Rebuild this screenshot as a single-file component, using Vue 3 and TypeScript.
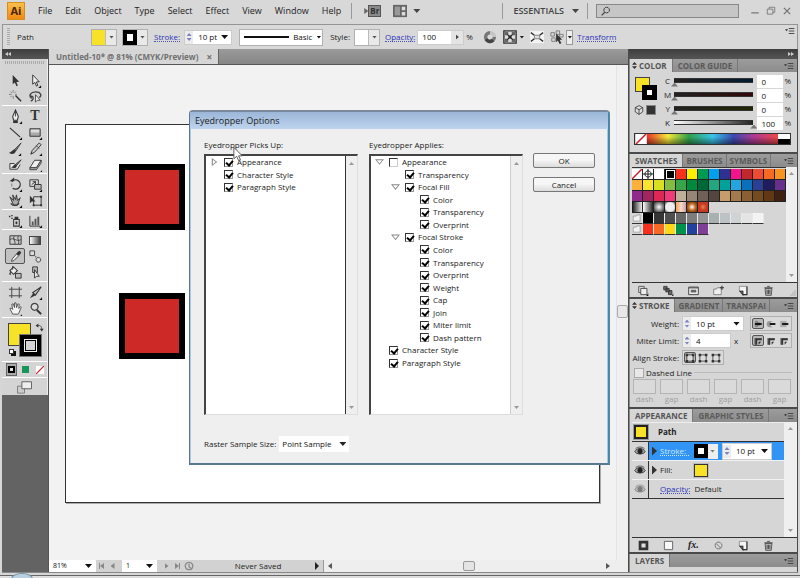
<script setup lang="ts">
import { h, ref } from 'vue'

type Shape = [d: string, fill: string, stroke?: string, width?: number]

const K = '#333'
const G = '#777'
const icons: Record<string, Shape[]> = {
  select: [['M5 2 L5 12 L7.300 10 L9 14 L10.500 13.300 L8.900 9.500 L12 9.300 Z', K]],
  direct: [['M5 2 L5 12 L7.300 10 L9 14 L10.500 13.300 L8.900 9.500 L12 9.300 Z', '#eee', K, 1], ['M14 13v3h-3z', '#111']],
  wand: [['M8 7 L14 13', 'none', K, 1.6], ['M5.500 1v3M5.500 7.500v3M1 5.700h3M7.500 5.700h2M2.500 2.700l1.500 1.500M8.500 2.700l-1.500 1.500M2.500 8.700l1.500-1.500', 'none', G, 0.9]],
  lasso: [['M4 10 C0 7 3 3 8 3 C14 3 15 7 12 9 M4 10 C2 9 3 7 5 8 C6 10 5 12 3 13', 'none', '#444', 1.4], ['M8 6v8l2-2 3 0z', '#eee', K, 0.8]],
  pen: [['M8 1 L5 8 L6 12 H10 L11 8 Z', '#eee', K, 1.1], ['M8 2v6', 'none', K, 0.9], ['M5.500 12.500h5v2.500h-5z', K], ['M15 13v3h-3z', '#111']],
  line: [['M2 3 L13 13', 'none', K, 1.2], ['M15 13v3h-3z', '#111']],
  rect: [['M2 4h11v8h-11z', '#aaa', K, 1], ['M3 5h9v3h-9z', '#ddd'], ['M15 13v3h-3z', '#111']],
  brush: [['M14 2 L7 9 L8.500 10.500 Z', G, K, 0.8], ['M7.500 9 C5 8.500 4 12 1 12.500 C4 15 8 14 8.500 10.500 Z', K], ['M14 13v3h-3z', '#111']],
  pencil: [['M12 2 L14 4 L7 12 L3 14 L4.500 10 Z', '#ccc', K, 1], ['M3 14 L3.700 12 L5 13.200Z', K], ['M9 5l3 3', 'none', K, 0.8], ['M15 13v3h-3z', '#111']],
  blob: [['M2 7h5M2 7v6h8l3-5', '#eee', K, 1], ['M14 3 L8 8 L9 9.500 Z', G, K, 0.9], ['M8.500 8 C6 7 6 11 3 11 C6 12.500 9 12 9.500 9.500Z', K]],
  eraser: [['M7 3.500 L14 3.500 L9 11.500 L2 11.500 Z', '#eee', K, 1], ['M2 11.500v2h7l5-7v-3l-5 8z', '#bbb', K, 0.9], ['M15 14v2h-2z', '#111']],
  rotate: [['M4 5 A5 5 0 1 1 5 12', 'none', K, 1.4], ['M1.500 4.500 h5 v-4z', K], ['M4 7v3', 'none', G, 1], ['M15 13v3h-3z', '#111']],
  scale: [['M2 3h9v7h-9z', '#ddd', K, 1], ['M7 8h7v5h-7z', '#bbb', K, 1], ['M4 8l4-3M5 5h3v3', 'none', K, 1], ['M15 13v3h-3z', '#111']],
  warp: [['M2 4 L6 8 L5 2 L8 7 L9 2 L10 8 L13 5 L10 13 H6 Z', '#aaa', K, 1], ['M3 11 C5 14 9 14 12 11', 'none', K, 1.3], ['M15 13v3h-3z', '#111']],
  free: [['M6 4h8v9h-8z', 'none', K, 1], ['M2 3v8l2-2 4 0z', K], ['M13 3h2v2h-2zM13 12h2v2h-2zM5 12h2v2h-2z', K]],
  spray: [['M6 7h6v7h-6z', '#ddd', K, 1.1], ['M7 4h4v3h-4z', K], ['M8 9h2v3h-2z', K], ['M1 3h1.500v1.500h-1.500zM3.500 2h1.500v1.500h-1.500zM3.500 5h1.500v1.500h-1.500z', K], ['M15 13v3h-3z', '#111']],
  graph: [['M2 3v11h11', 'none', K, 1], ['M4 9h2v4h-2zM7 6h2v7h-2zM10 4h2v9h-2z', '#555'], ['M15 13v3h-3z', '#111']],
  mesh: [['M2 3h12v9h-12z', '#ccc', K, 1], ['M2 7 C6 4 9 10 14 7 M7 3 C4 6 9 9 7 12 M11 3 C9 6 13 9 11 12', 'none', '#444', 1]],
  eyedropper: [['M10 4 L12.500 6.500 L6 13 L3 14 L4 11 Z', '#eee', K, 1], ['M9 5l2-3 2-1 2 2 -1 2 -3 2z', K]],
  blend: [['M2 2h5v5h-5z', '#ddd', K, 0.9], ['M11 9a2.500 2.500 0 1 0 .1 0z', '#ddd', K, 0.9], ['M7.500 7.500h1.500v1.500h-1.500z', G]],
  live: [['M2 6 L6 2 L10 6 L6 10 Z', '#eee', K, 1.1], ['M8 9h6v5h-6z', '#bbb', K, 1], ['M3 7 C0 9 2 12 3 10z', K], ['M5 1v4', 'none', K, 1]],
  livesel: [['M5 2h5v6h-5z', '#bbb', K, 1], ['M7 5v9l2-2 3 0z', '#eee', K, 1]],
  artboard: [['M4 2v12M12 2v12M1 4.500h14M1 11.500h14', 'none', '#444', 1]],
  slice: [['M14 2 L5 8 L8 11 Z', '#bbb', K, 1.1], ['M6 8 L2 14 L8 11Z', K], ['M15 13v3h-3z', '#111']],
  hand: [['M5 14 L2 8 L3.500 7.500 L5 9 L4 3.500 L5.500 3 L7 7 L7 2 L8.500 2 L9.200 7 L10.500 3 L12 3.500 L11.500 8 L13.500 6 L14 7 L11.500 13 L11 14 Z', '#f4f4f4', '#444', 0.9], ['M15 14v2h-2z', '#111']],
  zoom: [['M7 2.500a3.700 3.700 0 1 0 .1 0z', '#ddd', '#444', 1.3], ['M9.500 9.500 L14 14', 'none', K, 2.2]],
  swap: [['M4 5 C9 3 12 6 12 11', 'none', K, 1.4], ['M1 5l5-4v7zM8.500 10h7l-3.500 5z', K]],
  screen: [['M0 7h8v8h-8z', '#ccc', G, 1], ['M5 2h11v8h-11z', '#eee', '#555', 1]],
  search: [['M9 2a4.500 4.500 0 1 0 .1 0z', 'none', '#444', 1.6], ['M6 10 L1 15', 'none', '#444', 2]],
  arrange: [['M0 1h16v14h-16z', '#666'], ['M2 3h6v10h-6z', '#999'], ['M10 3h4v4h-4zM10 9h4v4h-4z', '#ddd']],
  globe: [['M8 3a5 5 0 1 0 5 5', 'none', G, 4], ['M8 3a5 5 0 0 1 5 5', 'none', '#c4c4c4', 4], ['M3.500 10.500a5 5 0 0 0 8 1', 'none', '#444', 4]],
  doc: [['M1 1h14v14h-14z', '#ddd', K, 1.6], ['M2 2h4v4h-4zM10 2h4v4h-4zM2 10h4v4h-4zM10 10h4v4h-4zM6 6h4v4h-4z', '#666'], ['M5 5l6 6M11 5l-6 6', 'none', '#222', 1.2]],
  isolate: [['M0 1h16v14h-16z', '#f4f4f4'], ['M1 3l4 3M15 3l-4 3M1 13l4-3M15 13l-4-3', 'none', K, 1.6], ['M5 6h6v4h-6z', '#ddd', G, 1]],
  similar: [['M1 3h4v4h-4zM7 1h4v4h-4zM2 9h4v4h-4zM11 5h4v3h-4z', 'none', G, 1], ['M7 4v10l2-2 2 4 2-1-2-4h3z', K]],
  cube: [['M8 1 L14 4 V11 L8 15 L2 11 V4 Z M2 4 L8 7.500 L14 4 M8 7.500 V15', '#ddd', K, 1.3]],
  none: [['M0 0h16v16h-16z', '#fff'], ['M0 16L16 0', 'none', '#c8202c', 2.4]],
  target: [['M0 0h16v16h-16z', '#fff'], ['M8 3a5 5 0 1 0 .1 0zM8 0v16M0 8h16', 'none', '#111', 1.5]],
  folder: [['M2 5h5l1-2h5v10h-11z', '#f2f2f2', '#888', 1]],
  lib: [['M1 2h8v9h-8z', '#ddd', '#555', 1.3], ['M4 5h9v9h-9z', '#eee', '#444', 1.3], ['M15 12v4h-3z', '#111']],
  kinds: [['M1 2h5v5h-5zM4 5h5v5h-5zM8 8h5v6h-5z', '#666', K, 1.2], ['M15 12v4h-2z', '#111']],
  opts: [['M1 3h14v11h-14z', '#eee', '#444', 1.4], ['M1 3h14v2h-14zM4 7h8v4h-8z', '#666']],
  newgroup: [['M1 6h4l1-2h6v10h-11z', '#eee', G, 1.2], ['M13 1v6M10 4h6', 'none', K, 1.6]],
  page: [['M2 2h11v12h-6v-5h-5z', '#f4f4f4', G, 1], ['M13 2v12h-7M3 9h4v5z', 'none', K, 1.6]],
  trash: [['M3 5h10l-1 10h-8z', '#bbb', '#444', 1.2], ['M2 4h12M6 2h4M6 7v6M8 7v6M10 7v6', 'none', '#444', 1.3]],
  eye: [['M1 9 C4 3 12 3 15 9 C12 13 4 13 1 9 Z', '#aaa', K, 1.2], ['M8 5a3.500 3.500 0 1 0 .1 0z', '#222'], ['M2 5 C5 2 11 2 14 5', 'none', K, 1]],
  cap1: [['M3 3h5v10h-5z', '#888'], ['M3 8h11', 'none', '#111', 3], ['M7 6h4v4h-4z', '#111']],
  cap2: [['M6 3h6a5 5 0 0 0 0 10h-6a5 5 0 0 1 0-10z', '#999'], ['M6 8h9', 'none', '#111', 3]],
  cap3: [['M2 3h10v10h-10z', '#aaa'], ['M5 8h10', 'none', '#111', 3]],
  join: [['M2 3h12v4h-7v7h-5z', '#777'], ['M4 5h10M5 5v9', 'none', '#222', 2], ['M9 9h4l-4 5z', K]],
  align: [['M3 3h10v10h-10z', '#ddd', '#444', 1.4], ['M1 1h4v4h-4zM11 1h4v4h-4zM1 11h4v4h-4zM11 11h4v4h-4z', K]],
  sqfill: [['M3 3h10v10h-10z', '#ddd', '#333', 4]],
  sq: [['M2 2h12v12h-12z', '#f8f8f8', '#666', 1.4]],
  ban: [['M8 3a5 5 0 1 0 .1 0zM4.500 5l7 7', 'none', '#777', 1.4]],
  clock: [['M8 2a6 6 0 1 0 .1 0z', 'none', '#888', 2], ['M8 4v5l5 4', 'none', '#888', 2]],
  min: [['M2 11h12', 'none', '#777', 2]],
  restore: [['M5 5V2h9v8h-3M2 5h9v8h-9z', 'none', '#777', 1.4]],
  close: [['M3 3l10 10M13 3l-10 10', 'none', '#777', 2.2]],
  menu: [['M0 5h5l-2.500 3.500z', K], ['M6 4h9M6 8h9M6 12h9', 'none', '#444', 1.5]],
  resize: [['M14 3v2M10 7v2M14 7v2M6 11v2M10 11v2M14 11v2', 'none', '#888', 2]],
  cursor: [['M2 1 L2 13 L5 10.500 L7 15 L9 14 L7 10 L11 10 Z', '#fff', '#555', 1]],
}

const Icon = (props: { n: string }) =>
  h('svg', { viewBox: '0 0 16 16', class: 'icon', 'aria-hidden': 'true' },
    icons[props.n].map(([d, fill, stroke, width]) =>
      h('path', { d, fill, stroke: stroke ?? 'none', 'stroke-width': width ?? 0 })))
Icon.props = ['n']

const menus = ['File', 'Edit', 'Object', 'Type', 'Select', 'Effect', 'View', 'Window', 'Help']
const tools = [
  ['select', 'direct', 'wand', 'lasso'],
  ['pen', 'type', 'line', 'rect', 'brush', 'pencil', 'blob', 'eraser'],
  ['rotate', 'scale', 'warp', 'free'],
  ['spray', 'graph'],
  ['mesh', 'gradient', 'eyedropper', 'blend', 'live', 'livesel'],
  ['artboard', 'slice', 'hand', 'zoom'],
]
const channels = ref([
  { name: 'C', value: 0, key: 'c' },
  { name: 'M', value: 0, key: 'm' },
  { name: 'Y', value: 0, key: 'y' },
  { name: 'K', value: 100, key: 'k' },
])
const swatchRows = [
  ['none', 'target', '#ffffff', '#000000', '#f5301f', '#fdee00', '#009a4e', '#00a0ef', '#2e3192', '#f3148c', '#c1272d', '#ef4a33', '#f66a24', '#f7931e'],
  ['#fbb03b', '#fbe42f', '#d9e021', '#84bc41', '#39a548', '#008a3c', '#006837', '#22a77e', '#00a19b', '#25a5de', '#0c6fbb', '#2b3f94', '#211d5c', '#67308f'],
  ['#8f2a8c', '#a3255f', '#de2757', '#f13a7c', '#bfb199', '#978676', '#706057', '#52463f', '#c69c6d', '#a4794b', '#8a5f34', '#744a20', '#603813', '#402010'],
  ['g1', 'g2', 'g3', 'g4', 'g5', 'g6', 'g7'],
  ['folder', '#000000', '#353535', '#4e4e4e', '#666666', '#7d7d7d', '#949494', '#a9b0b0', '#bdc2c4', '#d0d3d4', '#e4e4e4', '#f3f3f3'],
  ['folder', '#f5301f', '#f66a24', '#fdd816', '#00904a', '#2142a0', '#7e4097'],
]
const isHex = (s: string) => s.startsWith('#')
const isIcon = (s: string) => s in icons

const picks = ref([
  { label: 'Appearance', on: true, arrow: 'closed' },
  { label: 'Character Style', on: true, arrow: '' },
  { label: 'Paragraph Style', on: true, arrow: '' },
])
const applies = ref([
  { label: 'Appearance', on: false, level: 0, arrow: 'open' },
  { label: 'Transparency', on: true, level: 1, arrow: '' },
  { label: 'Focal Fill', on: true, level: 1, arrow: 'open' },
  { label: 'Color', on: true, level: 2, arrow: '' },
  { label: 'Transparency', on: true, level: 2, arrow: '' },
  { label: 'Overprint', on: true, level: 2, arrow: '' },
  { label: 'Focal Stroke', on: true, level: 1, arrow: 'open' },
  { label: 'Color', on: true, level: 2, arrow: '' },
  { label: 'Transparency', on: true, level: 2, arrow: '' },
  { label: 'Overprint', on: true, level: 2, arrow: '' },
  { label: 'Weight', on: true, level: 2, arrow: '' },
  { label: 'Cap', on: true, level: 2, arrow: '' },
  { label: 'Join', on: true, level: 2, arrow: '' },
  { label: 'Miter limit', on: true, level: 2, arrow: '' },
  { label: 'Dash pattern', on: true, level: 2, arrow: '' },
  { label: 'Character Style', on: true, level: 0, arrow: '' },
  { label: 'Paragraph Style', on: true, level: 0, arrow: '' },
])
const dashes = ['dash', 'gap', 'dash', 'gap', 'dash', 'gap']
</script>

<template>
  <div class="app">
    <header class="menubar">
      <span class="logo">Ai</span>
      <nav class="menus">
        <button v-for="m in menus" :key="m">{{ m }}</button>
      </nav>
      <i class="vsep"></i>
      <button class="bridge" aria-label="Bridge"><i class="tri right"></i><b>Br</b></button>
      <button class="arrange" aria-label="Arrange documents"><Icon n="arrange" class="big" /><i class="tri"></i></button>
      <i class="vsep push"></i>
      <button class="workspace">ESSENTIALS <i class="tri"></i></button>
      <i class="vsep"></i>
      <label class="search"><Icon n="search" /><input type="text" aria-label="Search" /></label>
      <div class="winbtns">
        <button aria-label="Minimize"><Icon n="min" /></button>
        <button aria-label="Restore"><Icon n="restore" /></button>
        <button aria-label="Close"><Icon n="close" /></button>
      </div>
    </header>

    <section class="control">
      <i class="grip-v"></i>
      <span class="kind">Path</span>
      <button class="combo" aria-label="Fill"><i class="chip fill"></i><i class="tri small"></i></button>
      <button class="combo" aria-label="Stroke color"><i class="chip stroke"></i><i class="tri small"></i></button>
      <a href="#" class="link strokelink">Stroke:</a>
      <div class="field weight"><i class="spin"></i><input type="text" value="10 pt" aria-label="Stroke weight" /><i class="tri"></i></div>
      <button class="combo profile"><i class="rule"></i>Basic<i class="tri small boxed"></i></button>
      <span class="stylelabel">Style:</span>
      <button class="combo" aria-label="Style"><i class="chip blank"></i><i class="tri small"></i></button>
      <a href="#" class="link">Opacity:</a>
      <div class="field opacity"><input type="text" value="100" aria-label="Opacity" /><i class="stepbtn"><i class="tri right"></i></i></div>
      <span class="pct">%</span>
      <div class="ctlicons">
        <button aria-label="Recolor"><Icon n="globe" class="big" /></button>
        <button aria-label="Align"><Icon n="doc" class="big" /><i class="tri small"></i></button>
        <button aria-label="Isolate"><Icon n="isolate" class="big" /></button>
        <button aria-label="Select similar"><Icon n="similar" class="big" /><i class="drop"><i class="tri small"></i></i></button>
      </div>
      <a href="#" class="link">Transform</a>
      <button class="flyout" aria-label="Control menu"><Icon n="menu" /></button>
    </section>

    <main class="work">
      <aside class="toolcol">
        <div class="darkbar"><i class="tri left"></i><i class="tri left"></i></div>
        <div class="toolbox">
          <i class="grip-h"></i>
          <div v-for="(g, gi) in tools" :key="gi" class="group">
            <button v-for="t in g" :key="t" :class="{ active: t === 'eyedropper' }" :aria-label="t">
              <span v-if="t === 'type'" class="letter">T</span>
              <i v-else-if="t === 'gradient'" class="gradtool"></i>
              <Icon v-else :n="t" class="tool" />
            </button>
          </div>
          <div class="fillstroke">
            <i class="bigfill"></i>
            <i class="bigstroke"><i></i></i>
            <Icon n="swap" class="swap" />
            <i class="mini"></i>
          </div>
          <div class="modes">
            <button class="active" aria-label="Color"><i class="mode black"></i></button>
            <button aria-label="Gradient"><i class="mode green"></i></button>
            <button aria-label="None"><Icon n="none" class="nomode" /></button>
          </div>
          <button class="screenmode" aria-label="Screen mode"><Icon n="screen" class="big" /></button>
        </div>
      </aside>

      <section class="document">
        <div class="tabs"><div class="doctab">Untitled-10* @ 81% (CMYK/Preview)<button aria-label="Close tab">×</button></div></div>
        <div class="view">
          <div class="canvas">
            <div class="artboard">
              <i class="square first"></i>
              <i class="square second"></i>
            </div>
          </div>
          <div class="vscroll"><i></i></div>
        </div>
        <footer class="status">
          <button class="white zoomlevel">81%<i class="tri"></i></button>
          <button class="nav" aria-label="First"><i class="bar"></i><i class="tri left"></i></button>
          <button class="nav" aria-label="Previous"><i class="tri left"></i></button>
          <button class="white pageno">1<i class="tri"></i></button>
          <button class="nav" aria-label="Next"><i class="tri right"></i></button>
          <button class="nav" aria-label="Last"><i class="tri right"></i><i class="bar"></i></button>
          <Icon n="clock" class="clock" />
          <button class="saved"><span>Never Saved</span><i class="tri right large"></i></button>
          <div class="hscroll"><i class="tri left"></i><i class="thumb"></i><i class="tri right"></i></div>
        </footer>
      </section>

      <aside class="dock">
        <div class="darkbar end"><i class="tri right"></i><i class="tri right"></i></div>

        <section class="panel">
          <div class="ptabs"><button class="on"><i class="updown"></i>COLOR</button><button>COLOR GUIDE</button><i class="pmenu"><Icon n="menu" /></i></div>
          <div class="color">
            <div class="proxy">
              <i class="pfill"></i><i class="pstroke"></i>
              <div class="minis"><Icon n="cube" /><i class="darkchip"></i></div>
            </div>
            <div class="channels">
              <label v-for="c in channels" :key="c.key">
                <span>{{ c.name }}</span>
                <span class="track" :class="c.key"><i class="bar"></i><i class="knob" :style="{ left: c.value + '%' }"></i></span>
                <input v-model="c.value" type="text" />
                <span class="unit">%</span>
              </label>
            </div>
            <div class="spectrum"><Icon n="none" class="nocolor" /><i class="rainbow"></i><i class="bw"></i></div>
          </div>
        </section>

        <section class="panel">
          <div class="ptabs snug"><button class="on">SWATCHES</button><button>BRUSHES</button><button>SYMBOLS</button><i class="pmenu"><Icon n="menu" /></i></div>
          <div class="scrollable">
            <div class="swatches">
              <div v-for="(row, ri) in swatchRows" :key="ri" class="srow" :class="'r' + ri">
                <template v-for="(s, si) in row" :key="si">
                  <i v-if="isHex(s)" class="sw" :class="{ sel: s === '#000000' && ri === 0 }" :style="{ background: s }"></i>
                  <i v-else-if="isIcon(s)" class="sw" :class="s"><Icon :n="s" class="fit" /></i>
                  <i v-else class="sw" :class="s"></i>
                </template>
              </div>
            </div>
            <div class="pscroll"><i class="tri up"></i><i class="tri"></i></div>
          </div>
          <div class="pbar">
            <button v-for="n in ['lib', 'kinds', 'opts', 'newgroup', 'page', 'trash']" :key="n" :aria-label="n"><Icon :n="n" class="bari" /></button>
            <Icon n="resize" class="corner" />
          </div>
        </section>

        <section class="panel">
          <div class="ptabs snug"><button class="on"><i class="updown"></i>STROKE</button><button>GRADIENT</button><button>TRANSPAI</button><i class="pmenu"><Icon n="menu" /></i></div>
          <div class="strokep">
            <div class="line">
              <label for="wt">Weight:</label>
              <div class="field w"><i class="spin"></i><input id="wt" type="text" value="10 pt" /><i class="tri"></i></div>
              <div class="seg"><button class="on" aria-label="Butt cap"><Icon n="cap1" /></button><button aria-label="Round cap"><Icon n="cap2" /></button><button aria-label="Projecting cap"><Icon n="cap3" /></button></div>
            </div>
            <div class="line">
              <label for="ml">Miter Limit:</label>
              <div class="field m"><i class="spin"></i><input id="ml" type="text" value="4" /></div><span class="x">x</span>
              <div class="seg"><button class="on" aria-label="Miter join"><Icon n="join" /></button><button aria-label="Round join"><Icon n="join" /></button><button aria-label="Bevel join"><Icon n="join" /></button></div>
            </div>
            <div class="line">
              <span class="lead">Align Stroke:</span>
              <div class="seg near"><button class="on" aria-label="Center"><Icon n="align" /></button><button aria-label="Inside"><Icon n="align" /></button><button aria-label="Outside"><Icon n="align" /></button></div>
            </div>
            <label class="dashed"><input type="checkbox" class="flat" />Dashed Line<i></i></label>
            <div class="dashes">
              <label v-for="(d, i) in dashes" :key="i"><input type="text" disabled />{{ d }}</label>
            </div>
          </div>
        </section>

        <section class="panel">
          <div class="ptabs"><button class="on">APPEARANCE</button><button>GRAPHIC STYLES</button><i class="pmenu"><Icon n="menu" /></i></div>
          <div class="scrollable">
            <div class="appear">
              <div class="arow head"><i class="cell"><i class="thumbp"></i></i><b>Path</b></div>
              <div class="arow selected">
                <i class="cell"><Icon n="eye" class="eyei" /></i><i class="disc"></i><a href="#" class="link">Stroke:</a>
                <i class="chip stroke"></i><i class="dropc"><i class="tri small"></i></i>
                <div class="field w2"><i class="spin"></i><input type="text" value="10 pt" aria-label="Weight" /><i class="tri"></i></div>
              </div>
              <div class="arow"><i class="cell"><Icon n="eye" class="eyei" /></i><i class="disc"></i><span class="name">Fill:</span><i class="chip yfill"></i></div>
              <div class="arow last"><i class="cell"><Icon n="eye" class="eyei faint" /></i><i class="disc hid"></i><a href="#" class="link">Opacity:</a><span>Default</span></div>
            </div>
            <div class="pscroll"><i class="tri up"></i><i class="tri"></i></div>
          </div>
          <div class="pbar">
            <button aria-label="New stroke"><Icon n="sqfill" class="bari" /></button>
            <button aria-label="New fill"><Icon n="sq" class="bari" /></button>
            <button aria-label="Effects" class="fx">fx.</button>
            <button aria-label="Clear"><Icon n="ban" class="bari" /></button>
            <button aria-label="Duplicate"><Icon n="page" class="bari" /></button>
            <button aria-label="Delete"><Icon n="trash" class="bari" /></button>
            <i class="corner"></i>
          </div>
        </section>

        <section class="panel layers">
          <div class="ptabs"><button class="on">LAYERS</button><i class="pmenu"><Icon n="menu" /></i></div>
        </section>
      </aside>
    </main>
    <div class="taskbar"><i class="orb"></i></div>

    <div class="dialog" role="dialog" aria-labelledby="dt">
      <h1 id="dt">Eyedropper Options</h1>
      <div class="dbody">
        <div class="dcol">
          <h2>Eyedropper Picks Up:</h2>
          <div class="list">
            <div class="tree short">
              <label v-for="p in picks" :key="p.label"><i class="node" :class="p.arrow"></i><input v-model="p.on" type="checkbox" class="tick" />{{ p.label }}</label>
            </div>
            <div class="pscroll"><i class="tri up"></i><i class="tri"></i></div>
          </div>
          <div class="raster">
            <label for="rs">Raster Sample Size:</label>
            <span class="selwrap"><select id="rs"><option>Point Sample</option></select><i class="tri"></i></span>
          </div>
        </div>
        <div class="dcol">
          <h2>Eyedropper Applies:</h2>
          <div class="list">
            <div class="tree long">
              <label v-for="(a, i) in applies" :key="i" :class="'lv' + a.level"><i class="node" :class="a.arrow"></i><input v-model="a.on" type="checkbox" class="tick" />{{ a.label }}</label>
            </div>
            <div class="pscroll"><i class="tri up"></i><i class="tri"></i></div>
          </div>
        </div>
        <div class="dbtns"><button>OK</button><button>Cancel</button></div>
      </div>
      <Icon n="cursor" class="pointer" />
    </div>
  </div>
</template>

<style>
body { margin: 0; overflow: hidden; }
</style>

<style scoped>
.app, .app * { box-sizing: border-box; }
.app { position: relative; display: grid; grid-template-rows: 24px 25px minmax(0, 1fr) 5px; height: 100vh; background: #d6d6d6; font: 8px/12px "Open Sans", "Noto Sans", sans-serif; color: #222; }
i { font-style: normal; display: block; flex: none; }
button { font: inherit; color: inherit; background: none; border: 0; padding: 0; display: flex; align-items: center; white-space: nowrap; }
input { font: inherit; color: #111; border: 0; padding: 0; margin: 0; background: none; min-width: 0; outline: 0; }
h1, h2 { margin: 0; font-weight: 400; }
.icon { width: 10px; height: 10px; display: block; flex: none; }
.icon.big { width: 14px; height: 14px; }
.tri { width: 7px; height: 4px; background: currentColor; clip-path: polygon(0 0, 100% 0, 50% 100%); }
.tri.small { width: 5px; height: 3px; }
.tri.up { clip-path: polygon(50% 0, 100% 100%, 0 100%); }
.tri.right { width: 4px; height: 6px; clip-path: polygon(0 0, 100% 50%, 0 100%); }
.tri.left { width: 4px; height: 6px; clip-path: polygon(100% 0, 100% 100%, 0 50%); }
.tri.large { height: 8px; }
.link { color: #2b35b8; text-decoration: none; line-height: 9px; border-bottom: 1px dotted #4a52c0; white-space: nowrap; }

.menubar { display: flex; align-items: center; padding: 0 8px 2px 7px; font-size: 9px; background: #d8d8d8; }
.logo { width: 18px; height: 18px; line-height: 16px; text-align: center; font-size: 11px; font-weight: 700; color: #4a2500; background: linear-gradient(#fbc04a, #f08a12); border: 1px solid #d98a20; margin-right: 13px; }
.menus { display: flex; gap: 13px; margin-right: 10px; }
.vsep { width: 1px; height: 16px; background: #999; }
.bridge { margin-left: 12px; color: #666; }
.bridge b { font-size: 8px; line-height: 10px; padding: 0 1px; background: #8a8a8a; color: #333; border: 1px solid #555; }
.arrange { margin-left: 12px; gap: 6px; color: #444; }
.push { margin-left: auto; }
.workspace { gap: 8px; margin: 0 8px 0 10px; font-weight: 600; color: #444; }
.search { display: flex; align-items: center; width: 143px; height: 14px; margin-left: 8px; padding-left: 4px; background: #c6c6c6; border: 1px solid #888; }
.search input { flex: 1; }
.winbtns { display: flex; gap: 6px; margin-left: 11px; }

.control { display: flex; align-items: center; margin: 0 2px; padding: 0 2px 0 4px; border: 1px solid #949494; border-bottom: 0; background: #d9d9d9; white-space: nowrap; }
.grip-v { width: 3px; height: 18px; background: repeating-linear-gradient(#aaa 0 1px, transparent 1px 2px); margin-right: 7px; }
.kind { width: 74px; }
.combo { height: 17px; background: #e9e9e9; border: 1px solid #b0b0b0; color: #555; gap: 3px; padding-right: 2px; margin-right: 5px; }
.chip { width: 14px; height: 15px; }
.chip.fill { background: #f7e227; border-right: 1px solid #bbb; }
.chip.stroke { background: #fff; border: 4px solid #000; }
.chip.blank { background: #fff; border-right: 1px solid #bbb; }
.strokelink { margin: 0 4px 0 1px; }
.field { display: flex; align-items: center; height: 15px; background: #fff; border: 1px solid #ccc; color: #111; }
.field input { flex: 1; width: 0; }
.spin { width: 8px; height: 13px; margin-right: 5px; background: #ececec; display: flex; flex-direction: column; align-items: center; justify-content: center; gap: 2px; }
.spin::before, .spin::after { content: ""; width: 5px; height: 3px; background: #7d84bf; clip-path: polygon(50% 0, 100% 100%, 0 100%); }
.spin::after { clip-path: polygon(0 0, 100% 0, 50% 100%); }
.field .tri { margin-right: 3px; }
.weight { width: 48px; margin-right: 7px; }
.profile { width: 84px; background: #fff; color: #111; gap: 4px; padding-left: 4px; margin-right: 7px; }
.rule { width: 45px; height: 2px; background: #111; }
.boxed { margin-left: auto; }
.stylelabel { margin-right: 4px; }
.opacity { width: 47px; margin: 0 2px; padding-left: 4px; }
.stepbtn { width: 12px; height: 13px; display: flex; align-items: center; justify-content: center; background: #e4e4e4; }
.stepbtn .tri.right { width: 3px; height: 5px; margin: 0; background: #444; }
.pct { width: 17px; }
.ctlicons { display: flex; gap: 6px; margin-right: 4px; }
.ctlicons button { gap: 2px; }
.drop { border: 1px solid #999; background: #eee; padding: 5px 0; }
.flyout { margin-left: auto; align-self: flex-start; padding-top: 1px; }

.work { display: grid; grid-template-columns: 47px minmax(0, 1fr) 170px; margin: 0 2px; border-bottom: 1px solid #888; min-height: 0; }
.darkbar { display: flex; align-items: center; height: 10px; padding: 0 3px; color: #ccc; background: linear-gradient(#3e3e3e, #555); }
.darkbar .tri { width: 3px; height: 4px; }
.darkbar.end { justify-content: flex-end; }
.toolcol { background: #636363; border-right: 1px solid #555; }
.toolbox { padding-top: 1px; background: #d4d4d4; border-right: 1px solid #eee; }
.grip-h { height: 3px; margin: 1px 3px 8px; background: repeating-linear-gradient(90deg, #aaa 0 1px, transparent 1px 2px); }
.group { display: grid; grid-template-columns: 20px 20px; padding: 2px 0 1px 3px; border-bottom: 1px solid #fff; }
.group:nth-child(2) { padding-top: 0; }
.group button { height: 16px; justify-content: center; }
.group button.active { border: 1px solid #555; background: #c2c2c2; border-radius: 2px; }
.icon.tool { width: 15px; height: 15px; }
.group .active .tool { width: 13px; height: 13px; }
.letter { font: 700 14px/14px "Liberation Serif", serif; color: #333; }
.gradtool { width: 12px; height: 9px; border: 1px solid #444; background: linear-gradient(90deg, #fff, #444); }
.fillstroke { position: relative; height: 44px; border-bottom: 1px solid #fff; }
.bigfill, .bigstroke, .swap, .mini { position: absolute; }
.bigfill { left: 6px; top: 5px; width: 23px; height: 23px; background: #f7e227; border: 1px solid #444; }
.bigstroke { left: 17px; top: 16px; width: 23px; height: 23px; background: #000; border: 1px solid #777; padding: 5px; }
.bigstroke i { width: 11px; height: 11px; background: #d4d4d4; border: 1px solid #000; outline: 1px solid #eee; }
.icon.swap { left: 33px; top: 5px; width: 9px; height: 9px; }
.mini { left: 7px; top: 31px; width: 5px; height: 5px; background: #fff; border: 1px solid #333; box-shadow: 2px 2px 0 #111; }
.modes { display: flex; gap: 3px; padding: 1px 0 1px 4px; border-bottom: 1px solid #fff; height: 16px; }
.modes button { width: 11px; justify-content: center; }
.modes button.active { border: 1px solid #666; background: #aaa; }
.icon.nomode { width: 8px; height: 8px; }
.mode { width: 7px; height: 7px; }
.black { border: 2px solid #000; background: #ddd; }
.green { background: #16965a; }
.screenmode { width: 100%; height: 17px; justify-content: center; }
.screenmode .icon { width: 17px; }

.document { display: flex; flex-direction: column; min-width: 0; }
.tabs { display: flex; height: 16px; background: linear-gradient(#9a9a9a, #868686); border-bottom: 1px solid #555; }
.doctab { display: flex; align-items: center; gap: 8px; padding: 0 6px 0 7px; background: #d6d6d6; border-right: 1px solid #666; font-weight: 700; color: #707070; white-space: nowrap; }
.doctab button { font-size: 10px; font-weight: 700; }
.view { flex: 1; display: flex; min-height: 0; background: #f2f2f2; }
.canvas { flex: 1; display: flex; padding: 59px 16px 57px; }
.artboard { position: relative; flex: 1; background: #fff; border: 1px solid #333; box-shadow: 1px 1px 0 #aaa; }
.square { position: absolute; left: 53px; width: 66px; height: 66px; background: #cd2926; border: 6px solid #000; }
.first { top: 39px; }
.second { top: 168px; }
.vscroll { width: 12px; border-left: 1px solid #e4e4e4; background: #f0f0f0; padding-top: 240px; }
.vscroll i { height: 13px; border: 1px solid #aaa; background: #e8e8e8; border-radius: 2px; }
.status { display: flex; align-items: center; height: 12px; background: #d2d2d2; font-size: 7px; color: #222; }
.status .white { background: #fff; height: 12px; justify-content: space-between; padding: 0 4px; color: #111; }
.zoomlevel { width: 47px; }
.pageno { width: 35px; margin: 0 4px; }
.nav { width: 11px; justify-content: center; color: #888; }
.nav .bar { width: 1px; height: 6px; background: #888; }
.clock { margin: 0 3px 0 1px; }
.saved { width: 127px; font-size: 8px; height: 12px; padding: 0 4px; border-right: 1px solid #999; }
.saved span { flex: 1; text-align: center; }
.hscroll { flex: 1; display: flex; align-items: center; justify-content: space-between; height: 12px; padding: 0 18px 0 4px; background: #eee; color: #555; }
.thumb { width: 12px; height: 10px; border: 1px solid #999; background: #e4e4e4; border-radius: 2px; }

.dock { display: flex; flex-direction: column; gap: 2px; background: #4a4a4a; padding: 0 1px; min-height: 0; overflow: hidden; }
.darkbar.end { margin-bottom: -2px; }
.panel { background: #d6d6d6; border-left: 1px solid #888; }
.ptabs { display: flex; height: 13px; background: linear-gradient(#9c9c9c, #8c8c8c); font-weight: 700; color: #5a5a5a; }
.ptabs button { padding: 0 5px; border-right: 1px solid #777; gap: 2px; }
.ptabs.snug button { padding: 0 3px; }
.ptabs.snug button.on { padding: 0 5px; }
.ptabs button.on { background: #d6d6d6; color: #555; }
.ptabs button.on:has(.updown) { padding-left: 2px; }
.updown { width: 5px; height: 7px; background: #333; clip-path: polygon(50% 0, 100% 40%, 0 40%, 0 60%, 100% 60%, 50% 100%, 0 60%, 0 40%); }
.pmenu { margin-left: auto; padding: 2px 3px 0 0; }

.color { display: grid; grid-template-columns: 30px minmax(0, 1fr); padding: 2px 6px 7px 4px; }
.proxy { position: relative; padding-top: 31px; }
.pfill, .pstroke { position: absolute; }
.pfill { left: 1px; top: 3px; width: 15px; height: 15px; background: #f7e227; border: 1px solid #444; }
.pstroke { left: 8px; top: 11px; width: 15px; height: 15px; background: #fff; border: 5px solid #000; }
.minis { display: flex; gap: 2px; }
.darkchip { width: 10px; height: 10px; background: #333; border: 1px solid #888; }
.channels label { display: flex; align-items: center; height: 14px; gap: 4px; }
.channels label > span:first-child { width: 6px; text-align: right; }
.track { flex: 1; position: relative; height: 11px; padding-top: 2px; }
.track .bar { height: 5px; background: linear-gradient(90deg, #222, #001a30); border: 1px solid #333; border-width: 1px 0; }
.track.m .bar { background: linear-gradient(90deg, #222, #300808); }
.track.y .bar { background: linear-gradient(90deg, #222, #202400); }
.track.k .bar { background: linear-gradient(90deg, #fff, #222); }
.knob { position: absolute; bottom: 0; width: 7px; height: 4px; margin-left: -3px; background: #777; clip-path: polygon(50% 0, 100% 100%, 0 100%); }
.channels input { width: 26px; height: 13px; background: #fff; padding-left: 4px; }
.unit { margin-left: -3px; }
.spectrum { grid-column: 1 / -1; display: flex; height: 12px; margin-top: 3px; border: 1px solid #333; }
.icon.nocolor { width: 12px; height: 10px; }
.rainbow { flex: 1; background: linear-gradient(transparent 30%, rgba(0, 0, 0, .45)), linear-gradient(90deg, #e8342a, #f5e83a 16%, #2f9f4a 32%, #39c4e8 50%, #3a48b0 66%, #b03a90 82%, #f04848); }
.bw { width: 12px; background: linear-gradient(#fff 50%, #000 50%); }

.scrollable { display: flex; min-height: 116px; border-bottom: 1px solid #333; margin: 0 0 0 2px; }
.pscroll { width: 13px; display: flex; flex-direction: column; justify-content: space-between; align-items: center; padding: 5px 0; background: #efefef; color: #999; }
.pscroll .tri { width: 5px; height: 3px; }
.swatches { flex: 1; padding-top: 1px; border-top: 1px solid #333; }
.srow { display: flex; height: 11px; }
.sw { width: 11px; height: 11px; border: 1px solid #222; border-width: 0 1px 1px 0; }
.r4 .sw, .r5 .sw { border-color: #e8e8e8; border-bottom-color: #333; }
.sw .fit { width: 10px; height: 10px; }
.sw.sel { outline: 1px solid #fff; outline-offset: -2px; }
.g1 { background: linear-gradient(90deg, #111, #eee); }
.g2 { background: linear-gradient(90deg, #fff, #222); }
.g3 { background: radial-gradient(#fff, #222); }
.g4 { background: radial-gradient(#eee 60%, #333); }
.g5 { background: linear-gradient(90deg, #f4a060, #f8dcc0 50%, #c8a0b8); }
.g6 { background: radial-gradient(#fff, #c06a20 50%, #5a2808); }
.g7 { background: radial-gradient(#e88050, #c83a20 50%); }
.pbar { display: flex; align-items: center; justify-content: space-between; height: 14px; padding: 0 1px 0 8px; }
.icon.bari { width: 11px; height: 11px; }
.corner { width: 8px; height: 8px; align-self: flex-end; }
.fx { font: italic 700 10px/12px "Liberation Serif", serif; }

.strokep { padding: 3px 5px 3px 2px; }
.line { display: flex; align-items: center; height: 17px; }
.line > label, .lead { width: 47px; text-align: right; margin-right: 3px; white-space: nowrap; }
.field.w { width: 62px; }
.field.m { width: 49px; }
.x { margin-left: 3px; }
.seg { display: flex; gap: 1px; height: 15px; padding: 1px; margin-left: auto; border: 1px solid #b0b0b0; background: #dadada; }
.seg button { width: 12px; justify-content: center; }
.seg .on { border: 1px solid #555; background: #b8b8b8; border-radius: 2px; }
.seg.near { margin-left: 0; }
.dashed { display: flex; align-items: center; height: 13px; gap: 2px; white-space: nowrap; }
.dashed i { flex: 1; height: 1px; background: #bbb; }
.flat { appearance: none; width: 10px; height: 10px; background: #e8e8e8; border: 1px solid #aaa; margin-left: 2px; }
.dashes { display: grid; grid-template-columns: repeat(6, 1fr); gap: 4px; padding: 0 1px; }
.dashes label { display: flex; flex-direction: column; align-items: center; line-height: 10px; color: #a0a0a0; }
.dashes input { width: 100%; height: 15px; border: 1px solid #b4b4b4; background: #dadada; }

.appear { flex: 1; padding-bottom: 38px; border-top: 1px solid #eee; }
.arow { display: flex; align-items: center; height: 19px; border-bottom: 1px solid #f2f2f2; }
.arow.head { border-bottom-color: #333; }
.arow.head b { margin-left: 8px; }
.arow.last { border-bottom-color: #333; }
.cell { width: 17px; height: 100%; border-right: 1px solid #333; display: flex; align-items: center; justify-content: center; margin-right: 1px; }
.head .cell { border-right: 0; }
.thumbp { width: 14px; height: 14px; border: 2px solid #222; background: #f7e227; outline: 1px solid #999; }
.icon.eyei { width: 12px; height: 12px; }
.icon.faint { opacity: .5; }
.disc { width: 5px; height: 9px; margin: 0 3px 0 2px; background: #333; clip-path: polygon(0 0, 100% 50%, 0 100%); }
.disc.hid { visibility: hidden; }
.selected { background: linear-gradient(90deg, #d6d6d6 17px, #3294f5 17px); }
.selected .link { color: #cfe8ff; border-color: #cfe8ff; width: 29px; margin-right: 5px; }
.selected .chip { height: 14px; }
.dropc { width: 10px; height: 15px; background: #eee; padding: 6px 2px; color: #777; }
.field.w2 { width: 50px; height: 17px; margin-left: 4px; }
.name { width: 34px; }
.yfill { background: #f7e227; border: 1px solid #333; outline: 1px solid #bbb; height: 13px; }
.last .link { margin-right: 4px; }
.layers { flex: 1; }

.taskbar { position: relative; overflow: hidden; background: linear-gradient(#d6d6d6 2px, #666 2px 3px, #ddd 3px); }
.orb { width: 22px; height: 12px; margin-left: 11px; border-radius: 50%; background: #b8d0e0; border: 1px solid #7890a0; }

.dialog { position: absolute; left: 189px; top: 110px; width: 421px; height: 355px; background: #efefef; border: 1px solid #56798f; border-top: 2px solid #7a8a9c; border-right: 2px solid #4b87a8; border-bottom-width: 2px; border-radius: 4px 4px 0 0; box-shadow: inset 1px 0 #a8c8e4, inset -1px 0 #a8c8e4; }
.dialog h1 { height: 17px; padding-left: 5px; font-size: 9px; line-height: 17px; background: linear-gradient(#9cb6d8, #bdd4ee); }
.dbody { display: flex; padding: 10px 12px 0 14px; gap: 11px; }
.dcol { width: 154px; }
.dcol h2 { font-size: 8px; line-height: 12px; margin-bottom: 3px; white-space: nowrap; }
.list { display: flex; height: 261px; background: #fff; border: 1px solid #777; border-width: 2px 1px 1px 2px; border-color: #444 #ddd #ddd #444; }
.list .pscroll { width: 12px; border-left: 1px solid #ccc; padding: 6px 0 5px; }
.dcol:first-child .pscroll { border-left-color: #333; }
.tree { flex: 1; display: flex; flex-direction: column; justify-content: space-between; padding-left: 4px; }
.tree.short { height: 37px; }
.tree.long { height: 213px; }
.tree label { display: flex; align-items: center; height: 12px; line-height: 12px; white-space: nowrap; }
.tree .lv1 { padding-left: 16px; }
.tree .lv2 { padding-left: 31px; }
.node { width: 9px; height: 8px; margin-right: 5px; }
.node.closed { background: #888; clip-path: polygon(20% 0, 80% 50%, 20% 100%, 20% 0, 32% 22%, 32% 78%, 63% 50%, 32% 22%); }
.node.open { background: #888; clip-path: polygon(0 15%, 100% 15%, 50% 85%, 0 15%, 20% 27%, 50% 68%, 80% 27%, 20% 27%); }
.tick { appearance: none; position: relative; width: 9px; height: 9px; margin-right: 4px; flex: none; background: #fff; border: 1px solid #ccc; border-top: 1px solid #333; border-left: 1px solid #333; }
.tick:checked { border-color: #333 #999 #999 #333; }
.tick:checked::after { content: ""; position: absolute; left: 2px; top: 0; width: 3px; height: 5px; border: solid #000; border-width: 0 2px 2px 0; transform: rotate(40deg); }
.dbtns { display: flex; flex-direction: column; gap: 9px; width: 62px; padding-top: 14px; margin-left: -1px; }
.dbtns button { height: 15px; justify-content: center; line-height: 10px; border: 1px solid #777; border-radius: 2px; background: linear-gradient(#f6f6f6 45%, #dcdcdc); }
.raster { display: flex; align-items: center; gap: 3px; margin-top: 21px; white-space: nowrap; }
.selwrap { display: flex; align-items: center; position: relative; background: #fff; height: 16px; width: 70px; }
select { font: inherit; appearance: none; border: 0; background: none; width: 100%; padding: 0 0 0 3px; color: #111; }
.selwrap .tri { position: absolute; right: 3px; pointer-events: none; }
.icon.pointer { position: absolute; left: 42px; top: 34px; width: 15px; height: 16px; }
</style>
